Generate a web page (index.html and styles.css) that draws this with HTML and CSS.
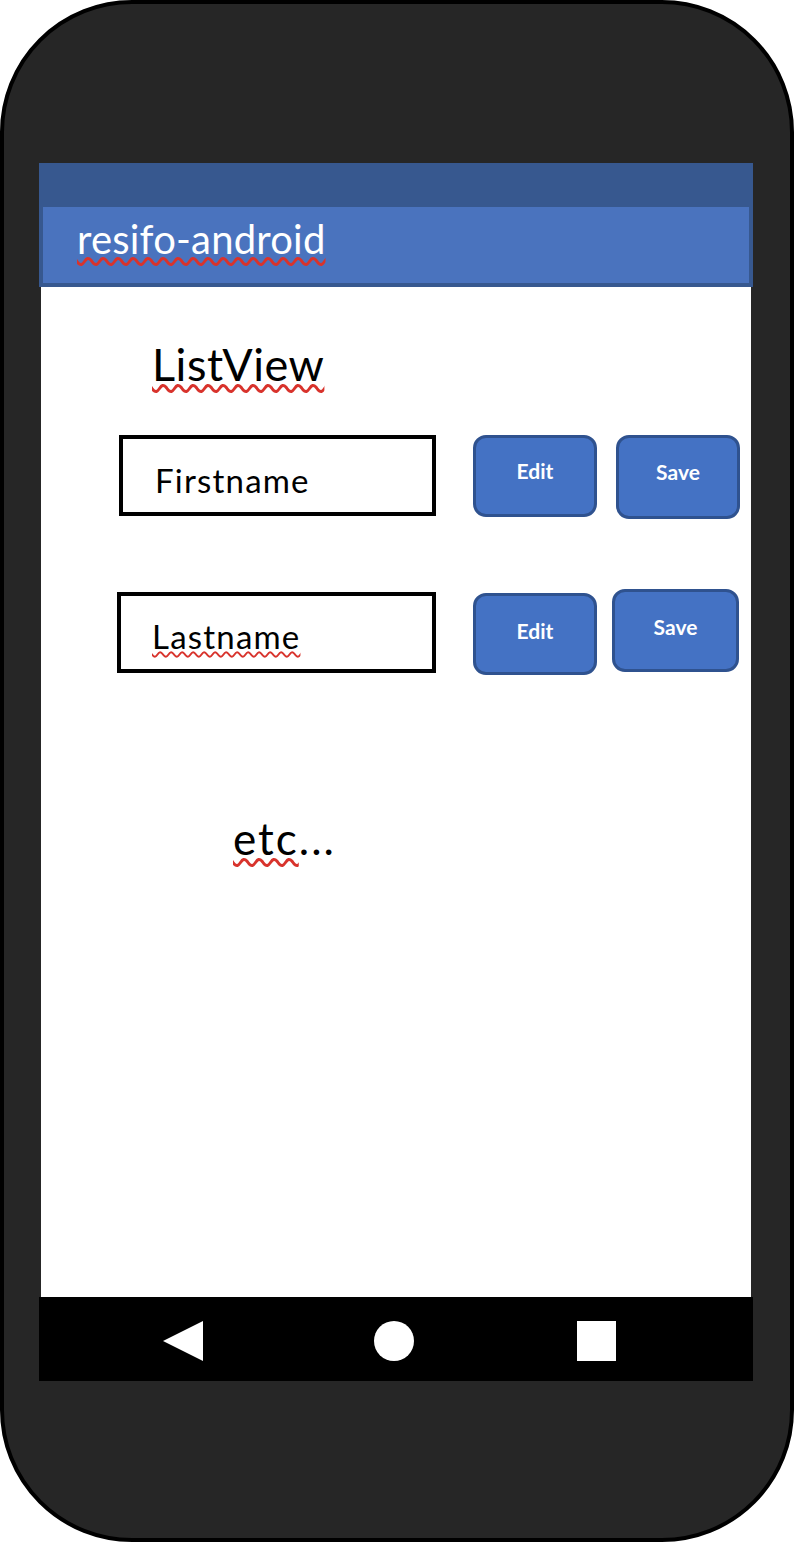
FILE: index.html
```html
<!DOCTYPE html>
<html lang="en">
<head>
<meta charset="utf-8">
<title>resifo-android</title>
<link rel="stylesheet" href="styles.css">
</head>
<body>
<div class="phone">
  <div class="screen">
    <div class="appbar">
      <div class="appbar-inner">
        <span class="appbar-title misspelt">resifo-android</span>
      </div>
    </div>
    <div class="content">
      <div class="heading"><span class="misspelt">ListView</span></div>
      <div class="row row-first">
        <div class="field field-first"><span class="field-text">Firstname</span></div>
        <div class="btn btn-edit-first"><span>Edit</span></div>
        <div class="btn btn-save-first"><span>Save</span></div>
      </div>
      <div class="row row-last">
        <div class="field field-last"><span class="field-text misspelt-thin">Lastname</span></div>
        <div class="btn btn-edit-last"><span>Edit</span></div>
        <div class="btn btn-save-last"><span>Save</span></div>
      </div>
      <div class="etc"><span class="misspelt">etc</span>...</div>
    </div>
    <div class="nav">
      <svg class="nav-back" width="40" height="40" viewBox="0 0 40 40"><polygon points="0,20 40,0 40,40" fill="#fff"/></svg>
      <svg class="nav-home" width="40" height="40" viewBox="0 0 40 40"><circle cx="20" cy="20" r="20" fill="#fff"/></svg>
      <svg class="nav-recent" width="39" height="40" viewBox="0 0 39 40"><rect x="0" y="0" width="39" height="40" fill="#fff"/></svg>
    </div>
  </div>
</div>
</body>
</html>
```

FILE: styles.css
```css
html, body {
  margin: 0;
  padding: 0;
  background: #ffffff;
}

body {
  font-family: Lato, "Open Sans", sans-serif;
}

.phone {
  width: 794px;
  height: 1542px;
  box-sizing: border-box;
  border: 4px solid #000;
  border-radius: 132px;
  background: #262626;
  padding-top: 159px;
  padding-left: 35px;
}

.screen {
  width: 714px;
}

.appbar {
  height: 124px;
  box-sizing: border-box;
  background: #37588f;
  padding: 44px 4px 4px;
}

.appbar-inner {
  height: 76px;
  background: #4a73be;
  box-sizing: border-box;
  padding-left: 34px;
  padding-top: 12px;
}

.appbar-title {
  display: inline-block;
  color: #fff;
  font-size: 40px;
  line-height: 40px;
  letter-spacing: 0.2px;
}

.misspelt {
  text-decoration: underline wavy #d8332c;
  text-decoration-thickness: 2.5px;
  text-underline-offset: 3px;
  text-decoration-skip-ink: none;
}

.misspelt-thin {
  text-decoration: underline wavy #d8332c;
  text-decoration-thickness: 1.5px;
  text-underline-offset: 2px;
  text-decoration-skip-ink: none;
}

.content {
  margin: 0 2px;
  height: 1010px;
  background: #fff;
  box-sizing: border-box;
  padding-top: 55px;
  color: #000;
}

.heading {
  font-size: 45px;
  line-height: 45px;
  padding-left: 111px;
  letter-spacing: 0.5px;
}

.row {
  display: flex;
  align-items: flex-start;
}

.row-first {
  margin-top: 48px;
}

.row-last {
  margin-top: 70px;
}

.field {
  box-sizing: border-box;
  border: 4px solid #000;
  height: 81px;
  font-size: 33px;
  line-height: 33px;
}

.field-first {
  width: 317px;
  margin-left: 78px;
  margin-top: 0;
  padding: 25px 0 0 32px;
}

.field-last {
  width: 319px;
  margin-left: 76px;
  margin-top: 3px;
  padding: 24px 0 0 31px;
}

.field-text {
  display: inline-block;
  letter-spacing: 1.2px;
}

.btn {
  box-sizing: border-box;
  background: #4472c4;
  border: 3px solid #2f528f;
  border-radius: 13px;
  color: #fff;
  font-weight: bold;
  font-size: 21px;
  line-height: 21px;
  text-align: center;
}

.btn-edit-first {
  width: 124px;
  height: 82px;
  margin-left: 37px;
  padding-top: 22px;
}

.btn-save-first {
  width: 124px;
  height: 84px;
  margin-left: 19px;
  padding-top: 23px;
}

.btn-edit-last {
  width: 124px;
  height: 82px;
  margin-left: 37px;
  margin-top: 4px;
  padding-top: 24px;
}

.btn-save-last {
  width: 127px;
  height: 83px;
  margin-left: 15px;
  padding-top: 24px;
}

.etc {
  font-size: 44px;
  line-height: 44px;
  padding-left: 192px;
  margin-top: 141px;
  letter-spacing: 2px;
}

.nav {
  height: 84px;
  box-sizing: border-box;
  padding-top: 4px;
  background: #000;
  display: flex;
  align-items: center;
}

.nav-back {
  margin-left: 124px;
}

.nav-home {
  margin-left: 171px;
}

.nav-recent {
  margin-left: 163px;
}
```
